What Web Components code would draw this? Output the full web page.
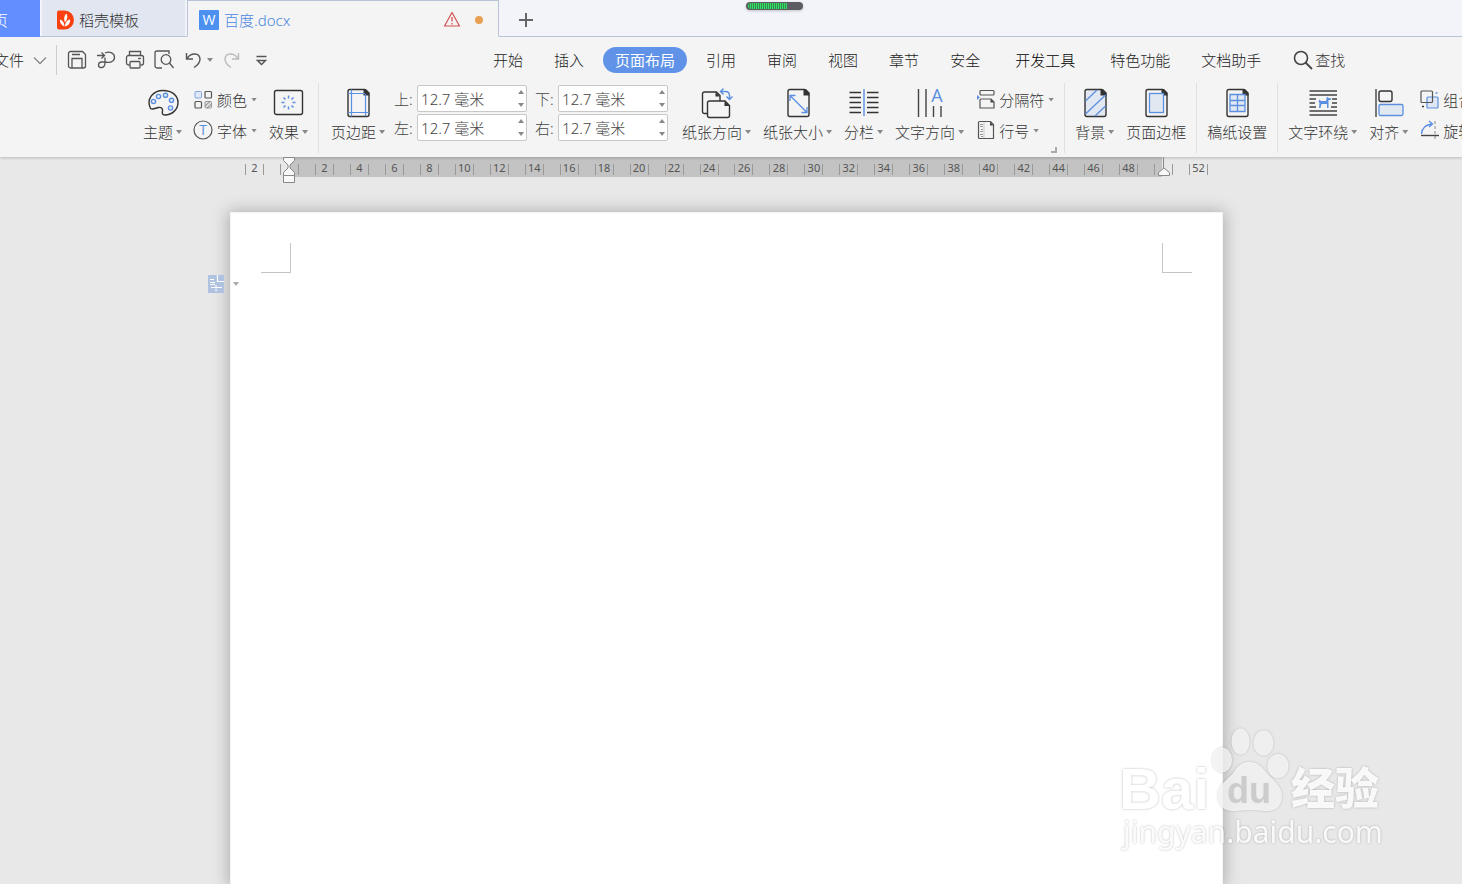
<!DOCTYPE html>
<html lang="zh-CN">
<head>
<meta charset="utf-8">
<title>百度.docx</title>
<style>
html, body { margin: 0; height: 100%; }
body {
  font: 15px/20px "Noto Sans", "Noto Sans CJK SC", sans-serif;
  font-weight: 300;
  color: #444;
  overflow: hidden;
  --blue: #5b8fe0;
  --ink: #444;
  --line: #b9c3d6;
}
</style>
</head>
<body>
<writer-app></writer-app>

<script>
const page = 'M8 2.5h14.500l4.500 4.500v20.500a2 2 0 0 1-2 2H8a2 2 0 0 1-2-2v-23a2 2 0 0 1 2-2z';
const fold = '<path d="M21.500 2h2.500l3.500 3.500v3h-6z" fill="#333"/>';
const ICONS = {
  theme: [32, `<path d="M3.500 21.500C-1 12 6 3.500 16 3.500c9 0 15 5 15 12 0 7-6 12.500-13 12.500-3 0-3-2-2.500-4 .5-3-1.500-4-4-3.500-3 .6-6 2.500-8 1z" fill="none" stroke="#333" stroke-width="1.400"/><g fill="#e6eefb" stroke="#5b8fe0" stroke-width="1.400"><circle cx="6.500" cy="14.500" r="2.100"/><circle cx="11.500" cy="9.500" r="2.100"/><circle cx="18.500" cy="8.300" r="2.100"/><circle cx="24.500" cy="13.300" r="2.100"/><circle cx="23.500" cy="21" r="2.100"/></g>`],
  effect: [32, `<rect x="1.500" y="3.500" width="28" height="24" rx="2" fill="none" stroke="#333" stroke-width="1.400"/><g stroke="#5b8fe0" stroke-width="1.500"><path d="M15.500 8.500v3M15.500 19.500v3M8.500 15.500h3M19.500 15.500h3M10.500 10.500l2 2M18.500 18.500l2 2M20.500 10.500l-2 2M12.500 18.500l-2 2"/></g>`],
  margins: [32, `<path d="${page}" fill="none" stroke="#333" stroke-width="1.400"/>${fold}<path d="M9.500 2.500v27M23.500 7v22M6 6.500h17M6 25.500h21" stroke="#5b8fe0" fill="none" stroke-width="1.200"/>`],
  orient: [32, `<path d="M6 26.500H3.500a2 2 0 0 1-2-2V7a2 2 0 0 1 2-2h12l3.500 3.500V14" fill="none" stroke="#333" stroke-width="1.400"/><path d="M14.500 5l4.500 4.500h-4.500z" fill="#333"/><path d="M8.500 14h15.500l4.500 4.500v10a2 2 0 0 1-2 2h-18a2 2 0 0 1-2-2V16a2 2 0 0 1 2-2z" fill="#f4f4f4" stroke="#333" stroke-width="1.400"/><path d="M23.500 14l5 5h-5z" fill="#333"/><path d="M19.500 4.500h5c3 0 4 2 4 4v4M22.500 1.500l-3 3 3 3M25.500 9.500l3 3 3-3" fill="none" stroke="#5b8fe0" stroke-width="1.400"/>`],
  size: [32, `<path d="${page}" fill="none" stroke="#333" stroke-width="1.400"/>${fold}<path d="M8.500 9l16 16M8 14V8.500h5.500M19.500 25.500H25V20" fill="none" stroke="#5b8fe0" stroke-width="1.300"/>`],
  columns: [32, `<path d="M1.500 5.500H13M1.500 10.500H13M1.500 15.500H13M1.500 20.500H13M1.500 25.500H13M19 5.500h11.500M19 10.500h11.500M19 15.500h11.500M19 20.500h11.500M19 25.500h11.500" stroke="#333" stroke-width="1.400"/><path d="M16 2v27" stroke="#5b8fe0" stroke-width="1.400"/>`],
  textdir: [32, `<path d="M4.500 2v28M12 2v28M19.500 19v11M27 19v11" stroke="#444" stroke-width="1.400"/><text x="23" y="15" text-anchor="middle" font-size="18" fill="#5b8fe0">A</text>`],
  bg: [32, `<path d="${page}" fill="#e2e8f2" stroke="#333" stroke-width="1.400"/>${fold}<path d="M6.500 14L18 3M6.500 27L26.500 8M16 29l10.500-10" stroke="#5b8fe0" stroke-width="1.300"/>`],
  border: [32, `<path d="${page}" fill="none" stroke="#333" stroke-width="1.400"/>${fold}<rect x="9.500" y="6.500" width="14" height="19" fill="#e2e8f2" stroke="#5b8fe0" stroke-width="1.300"/>`],
  grid: [32, `<path d="${page}" fill="none" stroke="#333" stroke-width="1.400"/>${fold}<path d="M9 7.500h15v17H9zM9 13.500h15M9 18.500h15M16.500 7.500v17" fill="#e2e8f2" stroke="#5b8fe0" stroke-width="1.300"/>`],
  wrap: [32, `<path d="M2.500 4H30M2.500 8H30M2.500 12H9M2.500 16H8M2.500 20H9M25 12h5M25 16h5M24 20h6M2.500 24H30M2.500 28H30" stroke="#444" stroke-width="1.300"/><path d="M20 9.500l1 1.200 3 .8v1.500h-2.500V21H20v-4h-5.500l-1 4H12l.5-5-1-1.500 1-2 1.500 1.500h5z" fill="#5b8fe0"/>`],
  align: [32, `<path d="M3 2v28" stroke="#444" stroke-width="1.400"/><rect x="6" y="4" width="13" height="10.500" rx="2" fill="none" stroke="#333" stroke-width="1.400"/><rect x="6" y="17.500" width="24" height="11" rx="1.500" fill="#e2e8f2" stroke="#5b8fe0" stroke-width="1.300"/>`],
  colors: [20, `<rect x="1" y="1.500" width="6.500" height="6.500" rx="1" fill="#e2e8f8" stroke="#7ea5e6"/><g fill="none" stroke="#555" stroke-width="1.200"><rect x="11" y="1.500" width="6.500" height="6.500" rx="1"/><rect x="1" y="11.500" width="6.500" height="6.500" rx="1"/></g><rect x="11" y="11.500" width="6.500" height="6.500" rx="1" fill="#ddd" stroke="#999"/><path d="M11 16l5-4.500M13 18l4.500-4" stroke="#888"/>`],
  fonts: [20, `<circle cx="9" cy="9" r="9" fill="none" stroke="#555" stroke-width="1.200"/><text x="9" y="14" text-anchor="middle" font-size="14" fill="#5b8fe0">T</text>`],
  breaks: [20, `<g fill="none" stroke="#555" stroke-width="1.200"><rect x="4" y="0.500" width="14" height="4.500" rx="1"/><path d="M5 9h10l3 3v6H4v-8a1 1 0 0 1 1-1z"/></g><path d="M14.500 9l3.500 3.500h-3.500z" fill="#444"/><path d="M1 5l3 2.500-3 2.500z" fill="#5b8fe0"/>`],
  lines: [20, `<path d="M3.500 0.500h11l3 3v14h-14a1 1 0 0 1-1-1v-15a1 1 0 0 1 1-1z" fill="none" stroke="#555" stroke-width="1.200"/><path d="M14 0.500l3.500 4H14z" fill="#444"/><path d="M8 1v16" stroke="#ccc"/><path d="M4 3.500h3M4 5.500h3M5 8.500h2M4 10.500h3M4 13.500h3M5 15.500h2" stroke="#999"/>`],
  group: [20, `<rect x="7" y="7" width="11" height="11" rx="1" fill="#dfe7f6" stroke="#5b8fe0" stroke-width="1.200"/><rect x="1" y="1" width="11.500" height="11.500" rx="1" fill="none" stroke="#555" stroke-width="1.200"/><path d="M2 16.500h2" stroke="#333" stroke-width="1.500"/><path d="M15.500 3h2" stroke="#5b8fe0" stroke-width="1.500"/>`],
  rotate: [20, `<path d="M1.500 13C2 7 6 3.500 12 3M9 0l3.500 3L9 6" fill="none" stroke="#5b8fe0" stroke-width="1.300"/><path d="M15 0v18" stroke="#888" stroke-dasharray="3 2"/><path d="M1 14.500h18" stroke="#444" stroke-width="1.400"/>`],
  save: [20, `<g fill="none" stroke="#555" stroke-width="1.300"><path d="M3.500 1.500h12l3 3v11.500a2 2 0 0 1-2 2h-13a2 2 0 0 1-2-2v-12.500a2 2 0 0 1 2-2z"/><path d="M5 18V8.500h10V18M5 4.500h8"/></g>`],
  pdf: [20, `<g fill="none" stroke="#555" stroke-width="1.300"><path d="M1 5.500h7M5.500 2.500l3 3-3 3M9 3c5-2 9.500 0 9.500 4.500S13 13 9 12H5.500c-3.500 0-4 5-1 5.500S9 16 9 13V7.500"/></g>`],
  print: [20, `<g fill="none" stroke="#555" stroke-width="1.300"><path d="M4.500 5.500V1.500h11v4M4.500 15h-1a2 2 0 0 1-2-2V7.500a2 2 0 0 1 2-2h13a2 2 0 0 1 2 2V13a2 2 0 0 1-2 2h-1"/><rect x="5" y="11.500" width="10" height="6.500" rx="1"/><path d="M13 8.500h3"/></g>`],
  preview: [20, `<g fill="none" stroke="#555" stroke-width="1.300"><path d="M8 18H3a2 2 0 0 1-2-2V3a2 2 0 0 1 2-2h12v3"/><circle cx="12" cy="9.500" r="4.800"/><path d="M15.500 13l4 5"/></g>`],
  undo: [20, `<path d="M2.500 3v6H9M3 8.500C7 2.500 15.500 2.500 16 9c.2 4-3 6.500-6 8.500" fill="none" stroke="#555" stroke-width="1.400"/>`],
  redo: [20, `<path d="M16.500 3v6H10M16 8.500C12 2.500 3.500 2.500 3 9c-.2 4 3 6.500 6 8.500" fill="none" stroke="#bbb" stroke-width="1.400"/>`],
  more: [20, `<path d="M5.500 6.500h10M6.500 10.500l4 4 4-4z" fill="none" stroke="#555" stroke-width="1.500"/>`],
  chevron: [16, `<path d="M2 5.500l6 6 6-6" fill="none" stroke="#888" stroke-width="1.300"/>`],
  search: [20, `<circle cx="8" cy="8" r="6.500" fill="none" stroke="#444" stroke-width="1.600"/><path d="M12.500 12.500l6.500 6.500" stroke="#444" stroke-width="1.800"/>`],
  plus: [16, `<path d="M8 1v14M1 8h14" stroke="#666" stroke-width="2"/>`],
  alert: [20, `<path d="M10 2.500L17.500 16H2.500z" fill="none" stroke="#d45050" stroke-width="1.200" stroke-linejoin="round"/><path d="M10 7v4.500M10 13v1.500" stroke="#d45050" stroke-width="1.300"/>`],
  docer: [20, `<path d="M3 .5h5.500a9.500 9.500 0 1 1 0 19H3a2 2 0 0 1-2-2v-15a2 2 0 0 1 2-2z" fill="#fa4010"/><path d="M8.500 16.500C5 15 3.500 12 4 9.500c2 .5 3 2 4 4z" fill="#fff"/><path d="M9 12.500C7.500 9 8 5.500 10.500 3.500c1.500 2.500 1 6-1.500 9z" fill="#fff"/><path d="M9 16.500c0-4 2-6.500 5-7 .5 3.500-1.500 6-5 7z" fill="#fff"/>`],
  writer: [20, `<rect width="20" height="20" rx="1" fill="#4c90f0"/><text x="10" y="15" text-anchor="middle" font-size="14" fill="#fff">W</text>`]
};

/* Shared base: renders the subclass's markup into an open shadow root. */
class Base extends HTMLElement {
  connectedCallback() {
    if (this.shadowRoot) return;
    this.attachShadow({ mode: 'open' }).innerHTML =
      '<style>*{box-sizing:border-box}button,input{font:inherit;color:inherit;border:0;padding:0;margin:0;background:none}</style>' + this.view();
  }
}
const define = (name, view) => customElements.define(name, class extends Base { view() { return view(this); } });

define('ui-icon', el => {
  const [s, body] = ICONS[el.getAttribute('name')];
  return `<style>:host{display:block;flex:none}svg{display:block;overflow:visible;font-family:"Open Sans",sans-serif;font-weight:400}</style>
  <svg width="${s}" height="${s}" viewBox="0 0 ${s} ${s}" aria-hidden="true">${body}</svg>`;
});

define('ui-caret', () => `<style>:host{display:block;flex:none;width:6px;height:4px;background:#888;clip-path:polygon(0 0,100% 0,50% 100%)}:host([up]){clip-path:polygon(0 100%,100% 100%,50% 0)}</style>`);

define('icon-button', el => `<style>:host{display:block}button{display:flex;align-items:center;gap:3px}</style>
  <button aria-label="${el.getAttribute('label')}"><ui-icon name="${el.getAttribute('icon')}"></ui-icon>${el.hasAttribute('menu') ? '<ui-caret></ui-caret>' : ''}</button>`);

define('doc-tab', () => `<style>
  :host{display:flex;flex:none;height:37px;border-bottom:1px solid var(--line);background:#e1e6f1;color:#333}
  button{display:flex;align-items:center;gap:3px;width:100%;padding:3px 9px 0 14px;text-align:left}
  :host([home]) button{padding-left:7px}
  :host([home]){background:#628fff;color:#fff;border-color:#628fff}
  :host([active]){background:#f4f4f4;color:#4a86e0;border:1px solid var(--line);border-bottom-color:#f4f4f4}
  :host([active]) button{gap:5px;padding:3px 14px 0 11px}
  .end{display:flex;align-items:center;gap:13px;margin-left:auto}
  </style><button><slot name="icon"></slot><slot></slot><span class="end"><slot name="end"></slot></span></button>`);

define('tab-bar', () => `<style>
  :host{display:flex;position:relative;background:#f2f4f9;box-shadow:inset 0 -1px var(--line)}
  doc-tab:nth-of-type(1){width:54px;margin:0 2px 0 -14px}
  doc-tab:nth-of-type(2){width:143px;margin-right:2px}
  doc-tab:nth-of-type(3){width:312px}
  .dot{width:8px;height:8px;border-radius:4px;background:#e8a055;margin-right:1px}
  .add{padding:2px 19px 0}
  .meter{position:absolute;left:51%;top:2px;width:57px;height:8px;border-radius:4px;background:#5c5c62;overflow:hidden;box-shadow:0 1px 3px #0003}
  .meter i{display:block;height:6px;margin:1px 0 0 2px;width:39px;border-radius:3px 0 0 3px;background:repeating-linear-gradient(90deg,#2fe066 0 1px,#3a8a50 1px 2px)}
  </style>
  <doc-tab home>页</doc-tab>
  <doc-tab><ui-icon slot="icon" name="docer"></ui-icon>稻壳模板</doc-tab>
  <doc-tab active><ui-icon slot="icon" name="writer"></ui-icon>百度.docx
    <ui-icon slot="end" name="alert"></ui-icon><span slot="end" class="dot"></span></doc-tab>
  <button class="add" aria-label="新建"><ui-icon name="plus"></ui-icon></button>
  <span class="meter"><i></i></span>`);

define('menu-tab', () => `<style>
  :host{display:block;flex:none}button{height:26px;padding:0 12px;border-radius:13px;white-space:nowrap}
  :host([active]) button{background:#6093e8;color:#fff;font-weight:400}
  :host([strong]){margin:0 4px;color:#000}
  </style><button><slot></slot></button>`);

define('menu-bar', () => `<style>
  :host{display:flex;align-items:center;height:46px;color:#222;white-space:nowrap}
  .file{display:flex;align-items:center;gap:8px;margin-left:-6px}
  .rule{width:1px;height:30px;background:#ccc;margin:0 10px 0 8px}
  .quick{display:flex;align-items:center;gap:9px;width:414px;flex:none}
  icon-button[menu]{margin-left:1px}
  nav{display:flex;gap:7px}
  .find{display:flex;align-items:center;gap:2px;margin-left:20px;color:#333}
  </style>
  <button class="file">文件<ui-icon name="chevron"></ui-icon></button><span class="rule"></span>
  <div class="quick">
    <icon-button icon="save" label="保存"></icon-button><icon-button icon="pdf" label="输出为PDF"></icon-button>
    <icon-button icon="print" label="打印"></icon-button><icon-button icon="preview" label="打印预览"></icon-button>
    <icon-button icon="undo" label="撤销" menu></icon-button><icon-button icon="redo" label="恢复"></icon-button>
    <icon-button icon="more" label="更多"></icon-button>
  </div>
  <nav><menu-tab>开始</menu-tab><menu-tab>插入</menu-tab><menu-tab active>页面布局</menu-tab><menu-tab>引用</menu-tab><menu-tab>审阅</menu-tab><menu-tab>视图</menu-tab><menu-tab>章节</menu-tab><menu-tab>安全</menu-tab><menu-tab strong>开发工具</menu-tab><menu-tab>特色功能</menu-tab><menu-tab>文档助手</menu-tab></nav>
  <button class="find"><ui-icon name="search"></ui-icon>查找</button>`);

define('ribbon-button', el => `<style>
  :host{display:block;flex:none}
  button{display:flex;flex-direction:column;align-items:center;gap:3px;white-space:nowrap}
  .label{display:flex;align-items:center;gap:3px}
  :host([small]) button{flex-direction:row;gap:3px;height:31px}
  :host([small]) .label{gap:4px}
  </style><button><ui-icon name="${el.getAttribute('icon')}"></ui-icon><span class="label"><slot></slot>${el.hasAttribute('menu') ? '<ui-caret></ui-caret>' : ''}</span></button>`);

define('margin-field', el => `<style>
  :host{display:flex;align-items:center;gap:5px;color:#444}
  label{width:18px;white-space:nowrap}
  .box{display:flex;width:110px;height:27px;border:1px solid #c8c8c8;border-radius:2px;background:#fff}
  input{flex:1;min-width:0;padding-left:3px;outline:0}
  .spin{display:flex;flex-direction:column;justify-content:space-between;padding:4px 2px}
  .spin button{display:block}
  </style><label for="v"><slot></slot></label>
  <span class="box"><input id="v" type="text" value="${el.getAttribute('value')}"><span class="spin"><button aria-label="增加"><ui-caret up></ui-caret></button><button aria-label="减少"><ui-caret></ui-caret></button></span></span>`);

define('ribbon-bar', () => `<style>
  :host{display:flex;gap:12px;height:74px;padding:4px 0 0 143px;color:#333;overflow:hidden;position:relative}
  .col{display:flex;flex-direction:column;flex:none;margin-top:-3px}
  .rule{flex:none;width:1px;margin:-4px -2px 4px;background:#e0e0e0}
  .rule.wide{margin-right:0}
  .fields{display:grid;grid-template-columns:auto auto;gap:2px 8px;align-content:start;flex:none;margin:-2px 2px 0 -3px}
  .launch{position:relative}
  .launch i{position:absolute;right:-3px;bottom:4px;width:6px;height:6px;border:solid #aaa;border-width:0 2px 2px 0}
  </style>
  <ribbon-button icon="theme" menu>主题</ribbon-button>
  <div class="col"><ribbon-button small icon="colors" menu>颜色</ribbon-button><ribbon-button small icon="fonts" menu>字体</ribbon-button></div>
  <ribbon-button icon="effect" menu>效果</ribbon-button>
  <span class="rule wide"></span>
  <ribbon-button icon="margins" menu>页边距</ribbon-button>
  <div class="fields"><margin-field value="12.7 毫米">上:</margin-field><margin-field value="12.7 毫米">下:</margin-field><margin-field value="12.7 毫米">左:</margin-field><margin-field value="12.7 毫米">右:</margin-field></div>
  <ribbon-button icon="orient" menu>纸张方向</ribbon-button>
  <ribbon-button icon="size" menu>纸张大小</ribbon-button>
  <ribbon-button icon="columns" menu>分栏</ribbon-button>
  <ribbon-button icon="textdir" menu>文字方向</ribbon-button>
  <div class="col launch"><ribbon-button small icon="breaks" menu>分隔符</ribbon-button><ribbon-button small icon="lines" menu>行号</ribbon-button><i></i></div>
  <span class="rule"></span>
  <ribbon-button icon="bg" menu>背景</ribbon-button>
  <ribbon-button icon="border">页面边框</ribbon-button>
  <span class="rule"></span>
  <ribbon-button icon="grid">稿纸设置</ribbon-button>
  <span class="rule"></span>
  <ribbon-button icon="wrap" menu>文字环绕</ribbon-button>
  <ribbon-button icon="align" menu>对齐</ribbon-button>
  <div class="col"><ribbon-button small icon="group" menu>组合</ribbon-button><ribbon-button small icon="rotate" menu>旋转</ribbon-button></div>`);

define('page-ruler', () => {
  const cells = [];
  for (let n = -2; n <= 52; n += 2) {
    const text = n === 0 || n === 50 ? '' : Math.abs(n);
    const mark = n === 0
      ? '<svg width="12" height="27" viewBox="0 0 12 27"><path d="M.5.500h11v3L7 8v3l4.500 4.500v10H.5v-10L5 11V8L.5 3.500zM.5 18.500h11" fill="#f8f8f8" stroke="#888"/></svg>'
      : n === 50 ? '<svg width="12" height="27" viewBox="0 0 12 27"><path d="M5.500 0v11" stroke="#888"/><path d="M.5 18.500v-3L6 11l5.500 4.500v3z" fill="#f8f8f8" stroke="#888"/></svg>' : '';
    cells.push(`<span class="cell"><b>${text}</b>${mark}</span>`);
  }
  return `<style>
  :host{display:grid;grid-template-columns:repeat(28,1fr);width:979px;height:20px;
    background:linear-gradient(#c3c3c3,#c3c3c3) 53px 0/872px 100% no-repeat}
  .cell{display:flex;justify-content:center;position:relative;padding-top:7px}
  b{width:19px;height:11px;border:solid #999;border-width:0 1px;font:400 11px/7px "Noto Sans",sans-serif;color:#555;text-align:center}
  svg{position:absolute;top:0;left:50%;margin-left:-6px}
  </style>${cells.join('')}`;
});

define('paper-sheet', () => `<style>
  :host{display:flex;justify-content:space-between;position:relative;flex:1;width:993px;padding:30px;background:#fff;
    border:1px solid #f4f4f4;border-bottom:0;box-shadow:0 1px 15px 2px #00000040;box-sizing:border-box}
  .corner{width:30px;height:30px;border:solid #c4c4c4;border-width:0 1px 1px 0}
  .corner.right{border-width:0 0 1px 1px}
  button{position:absolute;left:-23px;top:62px;display:flex;align-items:center;gap:9px}
  ui-caret{background:#aaa}
  </style><span class="corner"></span><span class="corner right"></span>
  <button aria-label="粘贴选项"><svg width="16" height="18" viewBox="0 0 16 18"><path d="M0 0h16v18H0z" fill="#afc3e0"/><path d="M9.500 0v6.500H16M2 4.500h4M2 7.500h5M2 9.500h5M3 12.500h11M8 10v2M8 13.500v2.500" fill="none" stroke="#fff" stroke-width="1.200"/></svg><ui-caret></ui-caret></button>`);

define('site-mark', () => `<style>
  :host{display:block;position:absolute;right:62px;bottom:14px;pointer-events:none}
  svg{display:block;filter:drop-shadow(0 0 1px #0004)}
  text{fill:#fff}
  .latin{font:700 58px "Liberation Sans",sans-serif}
  .han{font:900 44px "Noto Sans CJK SC",sans-serif;fill-opacity:.9}
  .du{font:700 36px "Liberation Sans",sans-serif;fill:#ccc}
  .url{font:400 30px "Noto Sans",sans-serif;fill-opacity:.9}
  </style><svg width="300" height="160" viewBox="0 0 300 160">
  <text class="latin" x="19" y="99">Bai</text>
  <g fill="#fff" fill-opacity=".75"><ellipse cx="122" cy="50" rx="10" ry="12.500"/><ellipse cx="140.500" cy="31.500" rx="9" ry="13"/><ellipse cx="163.500" cy="33" rx="10" ry="12.500"/><ellipse cx="178" cy="56" rx="10.500" ry="12"/>
  <path d="M149 52c-8 0-12 5-15 10-4 6-16 12-16 24 0 9 6 15 15 15 6 0 10-1 17-1s11 1 17 1c9 0 15-6 15-15 0-11-12-18-17-25-4-5-8-9-16-9z"/></g>
  <text class="du" x="127" y="93">du</text><text class="han" x="191" y="95">经验</text>
  <text class="url" x="23" y="133">jingyan.baidu.com</text></svg>`);

define('writer-app', () => `<style>
  :host{display:flex;flex-direction:column;min-height:100vh;position:relative;background:#e8e8e8;overflow:hidden}
  header{background:#f4f4f4;box-shadow:0 1px 3px #0003;position:relative}
  main{display:flex;flex-direction:column;align-items:center;flex:1;gap:35px;padding-right:9px}
  </style><header><tab-bar></tab-bar><menu-bar></menu-bar><ribbon-bar></ribbon-bar></header>
  <main><page-ruler></page-ruler><paper-sheet></paper-sheet></main><site-mark></site-mark>`);
</script>
</body>
</html>
